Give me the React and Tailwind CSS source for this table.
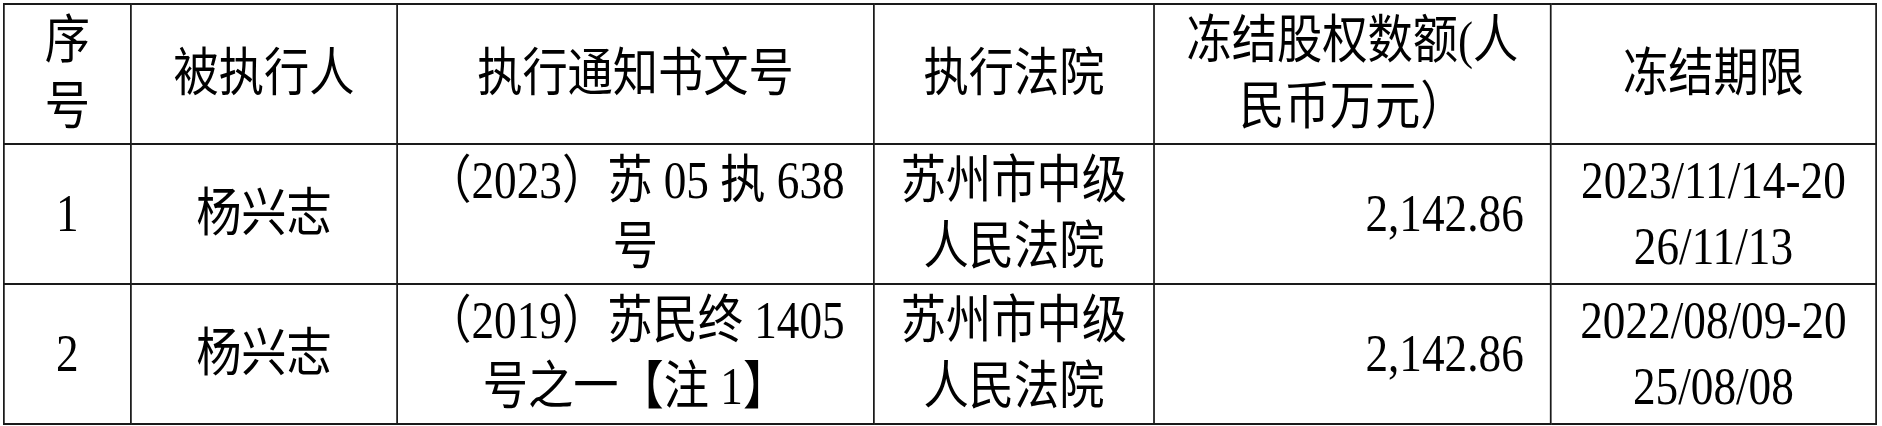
const rows = [
  {
    no: '1',
    name: '杨兴志',
    doc: ['（2023）苏 05 执 638', '号'],
    court: ['苏州市中级', '人民法院'],
    amount: '2,142.86',
    period: ['2023/11/14-20', '26/11/13'],
  },
  {
    no: '2',
    name: '杨兴志',
    doc: ['（2019）苏民终 1405', '号之一【注 1】'],
    court: ['苏州市中级', '人民法院'],
    amount: '2,142.86',
    period: ['2022/08/09-20', '25/08/08'],
  },
];

function Lines({ lines }) {
  return lines.map((l, i) => (
    <div key={i} className="whitespace-nowrap">
      {l}
    </div>
  ));
}

const cell = 'border-2 border-[#1a1a1a] align-middle text-center';

// the source document is rendered slightly condensed horizontally
export default function App() {
  return (
    <div className="bg-white w-[1882px] h-[426px] overflow-hidden pt-[3px] pl-[3px]">
      <div
        className="w-[2152px] origin-top-left scale-x-[0.87] text-black text-[52px] leading-[66px]"
        style={{ fontFamily: "'Liberation Serif', 'Noto Sans CJK SC', serif" }}
      >
        <table className="border-collapse table-fixed w-[2152px]">
          <colgroup>
            <col className="w-[146px]" />
            <col className="w-[306px]" />
            <col className="w-[548px]" />
            <col className="w-[322px]" />
            <col className="w-[456px]" />
            <col className="w-[374px]" />
          </colgroup>
          <thead>
            <tr className="h-[140px]">
              <th className={`${cell} font-normal`}>
                <Lines lines={['序', '号']} />
              </th>
              <th className={`${cell} font-normal`}>被执行人</th>
              <th className={`${cell} font-normal`}>执行通知书文号</th>
              <th className={`${cell} font-normal`}>执行法院</th>
              <th className={`${cell} font-normal`}>
                <Lines lines={['冻结股权数额(人', '民币万元）']} />
              </th>
              <th className={`${cell} font-normal`}>冻结期限</th>
            </tr>
          </thead>
          <tbody>
            {rows.map((r) => (
              <tr key={r.no} className="h-[140px]">
                <td className={cell}>{r.no}</td>
                <td className={cell}>{r.name}</td>
                <td className={cell}>
                  <Lines lines={r.doc} />
                </td>
                <td className={cell}>
                  <Lines lines={r.court} />
                </td>
                <td className="border-2 border-[#1a1a1a] align-middle text-right pr-[30px]">{r.amount}</td>
                <td className={cell}>
                  <Lines lines={r.period} />
                </td>
              </tr>
            ))}
          </tbody>
        </table>
      </div>
    </div>
  );
}
